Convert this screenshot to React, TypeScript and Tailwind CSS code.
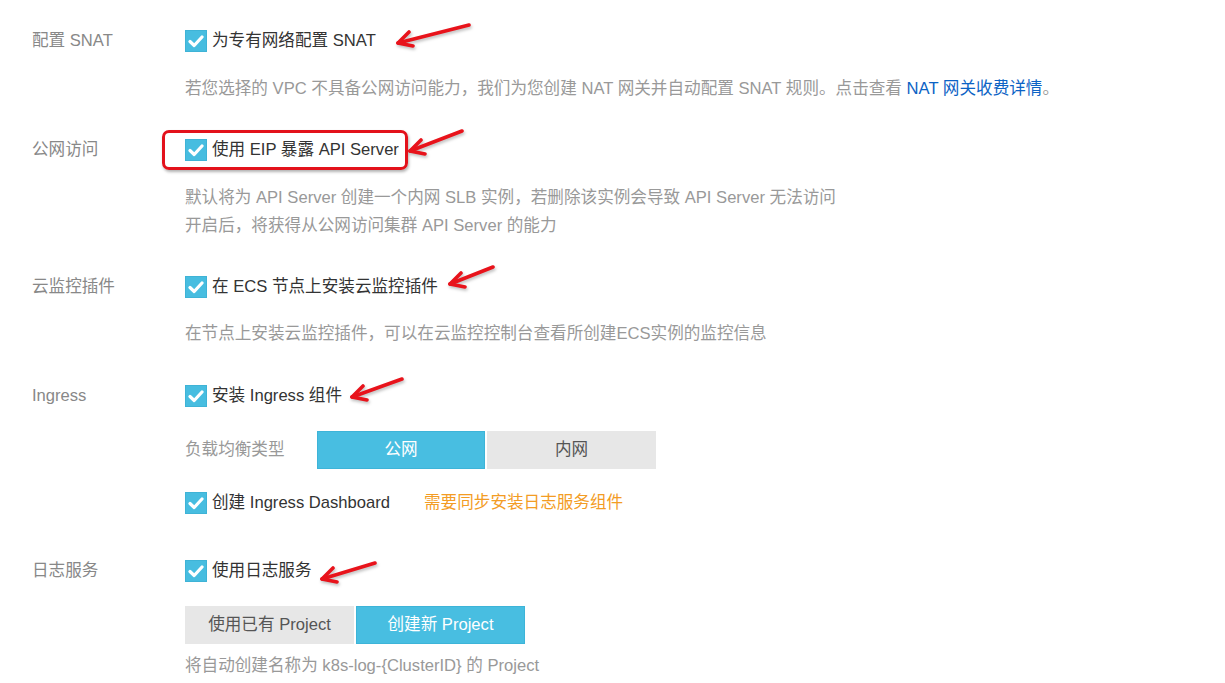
import React from "react";

function Check() {
  return (
    <span className="flex h-[22px] w-[22px] shrink-0 items-center justify-center bg-[#47bde0] border border-[#3fb3d6]">
      <svg width="16" height="14" viewBox="0 0 16 14">
        <path d="M2 7.5 L6.2 11.5 L14 3" fill="none" stroke="#fff" strokeWidth="3.2" strokeLinecap="round" strokeLinejoin="round" />
      </svg>
    </span>
  );
}

function Arrow({ className, tail }: { className: string; tail: string }) {
  return (
    <svg className={`absolute h-[40px] w-[90px] overflow-visible ${className}`} viewBox="0 0 90 40">
      <g fill="none" stroke="#e8131b" strokeWidth="3.6" strokeLinecap="round" strokeLinejoin="round" style={{ filter: "drop-shadow(1px 2px 1.5px rgba(0,0,0,0.25))" }}>
        <path d={`M8 28 L${tail}`} />
        <path d="M19 17 L8 28 L23 31" />
      </g>
    </svg>
  );
}

function CheckLine({ children, arrow, boxed }: { children: React.ReactNode; arrow?: React.ReactNode; boxed?: boolean }) {
  return (
    <div className="relative flex h-[28px] items-center">
      {boxed && (
        <div className="absolute left-[-23px] top-[-6px] h-[40px] w-[246px] rounded-[7px] border-[3px] border-[#e3111b] shadow-[1px_2px_3px_rgba(0,0,0,0.3)]" />
      )}
      <Check />
      <span className="relative ml-[5px] text-[#333]">{children}</span>
      {arrow}
    </div>
  );
}

function Row({ label, children, className }: { label: string; children: React.ReactNode; className?: string }) {
  return (
    <div className={`flex ${className ?? ""}`}>
      <div className="h-[28px] w-[153px] shrink-0 leading-[28px] text-[#888]">{label}</div>
      <div className="flex flex-col">{children}</div>
    </div>
  );
}

export default function App() {
  return (
    <div
      className="min-h-[683px] w-[1225px] bg-white px-[32px] pt-[27px] text-[16.6px]"
      style={{ fontFamily: '"Liberation Sans", "Noto Sans CJK SC", sans-serif' }}
    >
      <Row label="配置 SNAT">
        <CheckLine arrow={<Arrow className="left-[205px] top-[-12px]" tail="79 10" />}>为专有网络配置 SNAT</CheckLine>
        <p className="mt-[20px] leading-[28px] text-[#999]">
          若您选择的 VPC 不具备公网访问能力，我们为您创建 NAT 网关并自动配置 SNAT 规则。点击查看{" "}
          <a className="text-[#0c63c5]">NAT 网关收费详情</a>。
        </p>
      </Row>

      <Row label="公网访问" className="mt-[33px]">
        <CheckLine boxed arrow={<Arrow className="left-[217px] top-[-13px]" tail="60 8" />}>使用 EIP 暴露 API Server</CheckLine>
        <p className="mt-[20px] leading-[28px] text-[#999]">
          默认将为 API Server 创建一个内网 SLB 实例，若删除该实例会导致 API Server 无法访问
          <br />
          开启后，将获得从公网访问集群 API Server 的能力
        </p>
      </Row>

      <Row label="云监控插件" className="mt-[33px]">
        <CheckLine arrow={<Arrow className="left-[257px] top-[-17px]" tail="51 11" />}>在 ECS 节点上安装云监控插件</CheckLine>
        <p className="mt-[19px] leading-[28px] text-[#999]">在节点上安装云监控插件，可以在云监控控制台查看所创建ECS实例的监控信息</p>
      </Row>

      <Row label="Ingress" className="mt-[34px]">
        <CheckLine arrow={<Arrow className="left-[159px] top-[-13px]" tail="58 10" />}>安装 Ingress 组件</CheckLine>
        <div className="mt-[21px] flex items-center">
          <span className="w-[132px] text-[#999]">负载均衡类型</span>
          <div className="flex gap-[2px]">
            <button className="h-[38px] w-[168px] border border-[#3db4d8] bg-[#48bee1] text-white">公网</button>
            <button className="h-[38px] w-[169px] bg-[#e7e7e7] text-[#555]">内网</button>
          </div>
        </div>
        <div className="mt-[20px] flex items-center">
          <CheckLine>创建 Ingress Dashboard</CheckLine>
          <span className="ml-[34px] text-[#f39c24]">需要同步安装日志服务组件</span>
        </div>
      </Row>

      <Row label="日志服务" className="mt-[40px]">
        <CheckLine arrow={<Arrow className="left-[129px] top-[-6px]" tail="61 12" />}>使用日志服务</CheckLine>
        <div className="mt-[21px] flex gap-[2px]">
          <button className="h-[38px] w-[169px] bg-[#e7e7e7] text-[#555]">使用已有 Project</button>
          <button className="h-[38px] w-[169px] border border-[#3db4d8] bg-[#48bee1] text-white">创建新 Project</button>
        </div>
        <p className="mt-[8px] leading-[28px] text-[#999]">将自动创建名称为 k8s-log-{"{ClusterID}"} 的 Project</p>
      </Row>
    </div>
  );
}
